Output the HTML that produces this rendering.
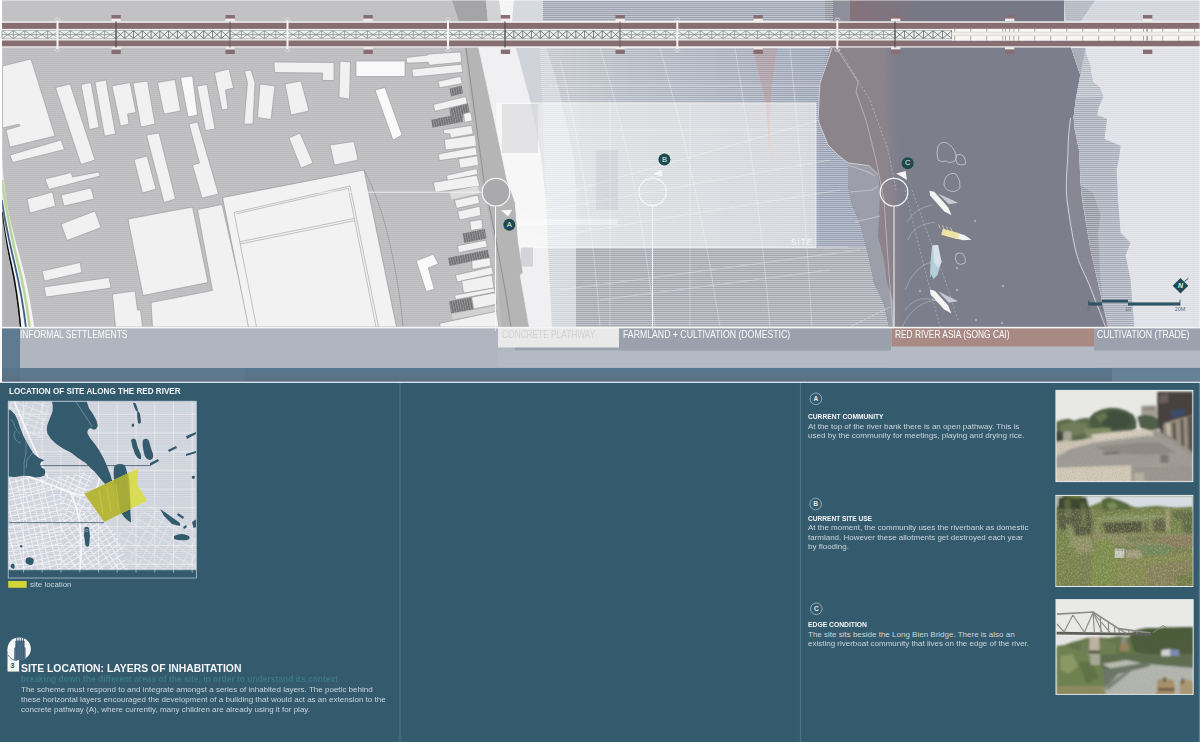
<!DOCTYPE html>
<html><head><meta charset="utf-8"><title>Site location: layers of inhabitation</title>
<style>
html,body{margin:0;padding:0;}
body{width:1200px;height:742px;position:relative;overflow:hidden;background:#345a6d;font-family:"Liberation Sans",sans-serif;}
svg{position:absolute;left:0;top:0;}
.t{position:absolute;white-space:nowrap;line-height:1;transform-origin:0 0;}

.lab{font-size:10.2px;color:#fbfcfd;}
.h{font-weight:bold;color:#f4f6f7;font-size:6.9px;}
.p{color:#cbd5dc;font-size:8px;}
.mk{color:#eef4f4;font-size:7.6px;}
.cm{font-weight:bold;color:#e3eaee;font-size:6.6px;}

</style></head><body>
<svg width="1200" height="742" viewBox="0 0 1200 742">
<defs>
<pattern id="hs" width="4" height="2" patternUnits="userSpaceOnUse"><rect width="4" height="1" fill="#ffffff" opacity="0.4"/></pattern>
<pattern id="hs2" width="4" height="2" patternUnits="userSpaceOnUse"><rect width="4" height="1" fill="#ffffff" opacity="0.14"/></pattern>
<pattern id="gs" width="4" height="2" patternUnits="userSpaceOnUse"><rect width="4" height="1" fill="#ffffff" opacity="0.07"/></pattern>
<clipPath id="topclip"><rect x="2.2" y="0" width="1198" height="327"/></clipPath>
<filter id="sb" x="-20%" y="-5%" width="140%" height="110%"><feGaussianBlur stdDeviation="4.5"/></filter>
<filter id="sb1" x="-20%" y="-5%" width="140%" height="110%"><feGaussianBlur stdDeviation="1.2"/></filter>
<clipPath id="rivclip"><polygon points="830.0,0.0 1064.0,0.0 1066.0,21.0 1071.2,47.9 1080.3,75.2 1076.0,98.2 1073.6,117.6 1074.8,130.0 1079.0,150.0 1080.5,183.0 1090.5,250.0 1108.0,327.0 889.0,327.0 884.0,304.0 874.0,283.0 869.0,258.0 861.0,227.0 852.0,204.0 848.0,186.0 848.0,163.0 838.0,155.0 828.0,145.0 818.0,120.0 820.0,83.0 830.0,48.0" fill="#000" /></clipPath>
<linearGradient id="tsg" x1="546" x2="830" y1="0" y2="0" gradientUnits="userSpaceOnUse"><stop offset="0" stop-color="#c0c3ca"/><stop offset="0.3" stop-color="#aeb4bf"/><stop offset="1" stop-color="#939daf"/></linearGradient>
<linearGradient id="tsn" x1="546" x2="830" y1="0" y2="0" gradientUnits="userSpaceOnUse"><stop offset="0" stop-color="#c2c4c9"/><stop offset="0.3" stop-color="#b3b6bd"/><stop offset="1" stop-color="#a3a8b2"/></linearGradient>
<linearGradient id="redg" x1="0" x2="1" y1="0" y2="0"><stop offset="0" stop-color="#86727a"/><stop offset="1" stop-color="#777886"/></linearGradient><pattern id="hatch" width="2.4" height="2.4" patternUnits="userSpaceOnUse" patternTransform="rotate(-12)"><rect width="2.4" height="2.4" fill="#6f6f72"/><rect width="0.7" height="2.4" fill="#a2a2a4"/><rect width="2.4" height="0.5" fill="#8e8e90"/></pattern><clipPath id="eastclip"><polygon points="478.8,48.0 494.0,118.0 507.0,180.0 515.2,202.2 518.2,240.6 523.2,273.0 520.2,275.0 529.3,327.0 900.0,327.0 900.0,48.0" fill="#000" /></clipPath><linearGradient id="stg" x1="0" x2="0" y1="0" y2="1"><stop offset="0" stop-color="#56758e"/><stop offset="0.5" stop-color="#59748a"/><stop offset="1" stop-color="#5b6f80"/></linearGradient><clipPath id="mapclip"><rect x="8.2" y="401.2" width="188.1" height="168.6"/></clipPath>
<pattern id="ms" width="4" height="1.9" patternUnits="userSpaceOnUse"><rect width="4" height="0.8" fill="#ffffff" opacity="0.28"/></pattern>
<clipPath id="mc1"><polygon points="8.0,478.0 46.0,478.0 62.0,500.0 62.0,570.0 8.0,570.0" fill="#000" /></clipPath>
<clipPath id="mc2"><polygon points="46.0,478.0 100.0,470.0 84.0,494.0 95.0,509.0 62.0,520.0 62.0,500.0" fill="#000" /></clipPath>
<clipPath id="mc3"><polygon points="62.0,520.0 95.0,509.0 104.0,522.0 118.0,535.0 128.0,570.0 62.0,570.0" fill="#000" /></clipPath>
<clipPath id="mc4"><polygon points="118.0,535.0 150.0,505.0 196.0,530.0 196.0,570.0 128.0,570.0" fill="#000" /></clipPath>
<clipPath id="mc5"><polygon points="8.0,401.0 50.0,401.0 46.0,420.0 40.0,440.0 20.0,428.0 8.0,409.0" fill="#000" /></clipPath>
<clipPath id="yclip"><polygon points="84.4,493.8 138.3,468.4 137.4,485.0 147.1,500.8 104.2,521.8" fill="#000" /></clipPath><filter id="b1" x="-10%" y="-10%" width="120%" height="120%"><feGaussianBlur stdDeviation="0.9"/></filter>
<filter id="b2" x="-10%" y="-10%" width="120%" height="120%"><feGaussianBlur stdDeviation="1.8"/></filter>
<filter id="b05" x="-10%" y="-10%" width="120%" height="120%"><feGaussianBlur stdDeviation="0.45"/></filter>
<filter id="nzd" x="0" y="0" width="100%" height="100%"><feTurbulence type="fractalNoise" baseFrequency="0.55 0.7" numOctaves="2" seed="4"/><feColorMatrix type="matrix" values="0 0 0 0 0.12  0 0 0 0 0.15  0 0 0 0 0.08  1.6 0 0 0 -0.62"/></filter>
<filter id="nzl" x="0" y="0" width="100%" height="100%"><feTurbulence type="fractalNoise" baseFrequency="0.6 0.5" numOctaves="2" seed="11"/><feColorMatrix type="matrix" values="0 0 0 0 0.78  0 0 0 0 0.8  0 0 0 0 0.55  0 1.6 0 0 -0.68"/></filter>
<filter id="nzs" x="0" y="0" width="100%" height="100%"><feTurbulence type="fractalNoise" baseFrequency="0.8" numOctaves="2" seed="2"/><feColorMatrix type="matrix" values="0 0 0 0 0.2  0 0 0 0 0.2  0 0 0 0 0.2  1.4 0 0 0 -0.6"/></filter>
<clipPath id="pcA"><rect x="1056.3" y="390.8" width="136.1" height="90.4"/></clipPath>
<clipPath id="pcB"><rect x="1056.3" y="495.8" width="136.1" height="90.3"/></clipPath>
<clipPath id="pcC"><rect x="1056.4" y="600.0" width="136.4" height="94.0"/></clipPath>
</defs>
<rect x="0" y="0" width="1200" height="383" fill="#ffffff"/>
<g clip-path="url(#topclip)">
<rect x="2" y="0" width="540" height="327" fill="#bdbdc0"/>
<rect x="2" y="0" width="540" height="327" fill="url(#gs)"/>
<polygon points="457.0,0.0 900.0,0.0 900.0,327.0 529.3,327.0 520.2,275.0 523.2,273.0 518.2,240.6 515.2,202.2 507.0,180.0 494.0,118.0 478.8,48.0 470.0,21.0" fill="#f0f0f2" />
<polygon points="516.0,48.0 546.0,48.0 556.0,80.0 566.0,120.0 574.0,160.0 576.0,190.0 576.0,327.0 552.0,327.0 548.0,247.0 546.0,200.0 540.0,150.0 530.0,100.0" fill="#cfd2d8" />
<polygon points="546.0,48.0 900.0,48.0 900.0,247.5 576.0,247.5 576.0,190.0 574.0,160.0 566.0,120.0 556.0,80.0" fill="url(#tsg)" />
<polygon points="561.0,103.0 816.0,103.0 816.0,247.5 576.0,247.5 576.0,190.0 574.0,160.0 566.0,120.0" fill="url(#tsn)" />
<rect x="576" y="247.5" width="324" height="80" fill="#a1a5af"/>
<rect x="2" y="0" width="455" height="21" fill="#c2c2c4"/>
<polygon points="452.0,0.0 486.0,0.0 488.0,21.5 459.0,21.5" fill="#a5a5a7" />
<polygon points="486.0,0.0 500.0,0.0 503.0,21.5 488.0,21.5" fill="#d2d3d5" />
<polygon points="499.0,0.0 514.0,0.0 512.0,21.5 502.0,21.5" fill="#f5f5f5" />
<polygon points="514.0,0.0 545.0,0.0 543.0,21.5 512.0,21.5" fill="#d6d9de" />
<rect x="543" y="0" width="290" height="21" fill="#9aa2b1"/>
<polygon points="830.0,0.0 1064.0,0.0 1066.0,21.0 1071.2,47.9 1080.3,75.2 1076.0,98.2 1073.6,117.6 1074.8,130.0 1079.0,150.0 1080.5,183.0 1090.5,250.0 1108.0,327.0 889.0,327.0 884.0,304.0 874.0,283.0 869.0,258.0 861.0,227.0 852.0,204.0 848.0,186.0 848.0,163.0 838.0,155.0 828.0,145.0 818.0,120.0 820.0,83.0 830.0,48.0" fill="#7d7e8c" />
<rect x="825" y="0" width="27" height="21" fill="#8e8f9a"/>
<rect x="850" y="0" width="216" height="21" fill="#777886"/>
<rect x="850" y="0" width="75" height="21" fill="url(#redg)"/>
<g clip-path="url(#rivclip)">
<polygon points="770.0,30.0 887.0,30.0 889.0,120.0 895.0,200.0 899.0,345.0 770.0,345.0" fill="#8c848b" filter="url(#sb)"/>
<polygon points="838.0,155.0 848.0,162.0 869.0,165.6 878.0,174.5 880.0,191.0 879.0,217.0 878.0,237.0 884.0,260.0 887.0,283.0 894.5,304.0 894.5,327.0 889.0,327.0 884.0,304.0 874.0,283.0 869.0,258.0 861.0,227.0 852.0,204.0 848.0,186.0 848.0,163.0" fill="#9c9eaa" />
</g>
<polygon points="540.0,48.0 832.0,48.0 820.0,83.0 818.0,120.0 828.0,145.0 838.0,155.0 848.0,163.0 848.0,186.0 852.0,204.0 861.0,227.0 869.0,258.0 874.0,283.0 884.0,304.0 889.0,327.0 552.0,327.0 548.0,247.0 546.0,200.0" fill="url(#hs)" />
<rect x="543" y="0" width="290" height="21" fill="url(#hs)"/>
<path d="M832 48L820 83L818 120L828 145L838 155L848 163L869 165.6L878 174.5" stroke="#e4e4ea" stroke-width="0.8" fill="none" opacity="0.85"/>
<polygon points="1070.0,118.0 1068.0,150.0 1067.0,200.0 1075.5,250.0 1090.5,288.0 1105.5,327.0 1110.0,327.0 1090.5,250.0 1080.5,183.0 1079.0,150.0 1074.8,130.0 1073.6,117.6" fill="#878894" />
<polygon points="1064.0,0.0 1200.0,0.0 1200.0,327.0 1108.0,327.0 1090.5,250.0 1082.2,200.0 1080.5,183.0 1079.0,150.0 1074.8,130.0 1073.6,117.6 1076.0,98.2 1080.3,75.2 1071.2,47.9 1066.0,21.0" fill="#dfe0e6" />
<rect x="1064" y="0" width="136" height="21.5" fill="#d3d5dd"/>
<polygon points="1064.0,0.0 1095.0,0.0 1080.7,21.5 1066.0,21.5" fill="#b5b9c3" />
<polygon points="1080.3,75.2 1085.2,47.9 1086.4,55.8 1090.0,64.2 1091.2,74.0 1093.0,82.4 1099.7,87.3 1103.3,97.0 1098.5,107.9 1097.3,115.2 1107.0,118.8 1104.5,139.0 1120.6,145.8 1119.0,158.0 1116.6,170.0 1118.0,200.0 1120.6,232.7 1130.6,242.7 1125.6,255.3 1130.6,280.3 1134.3,327.0 1108.0,327.0 1090.5,250.0 1082.2,200.0 1080.5,183.0 1079.0,150.0 1074.8,130.0 1073.6,117.6 1076.0,98.2" fill="#a4a9b6" />
<polygon points="1080.3,75.2 1085.2,47.9 1086.4,55.8 1090.0,64.2 1091.2,74.0 1093.0,82.4 1099.7,87.3 1103.3,97.0 1076.0,98.2" fill="#b4b8c2" />
<polygon points="1081.0,186.0 1093.0,192.6 1100.5,215.0 1098.0,232.7 1100.5,280.0 1103.0,300.0 1090.5,250.0" fill="#8f93a0" />
<polygon points="1064.0,0.0 1200.0,0.0 1200.0,327.0 1108.0,327.0 1090.5,250.0 1082.2,200.0 1080.5,183.0 1079.0,150.0 1074.8,130.0 1073.6,117.6 1076.0,98.2 1080.3,75.2 1071.2,47.9 1066.0,21.0" fill="url(#hs2)" />
<polygon points="1080.3,75.2 1085.2,47.9 1086.4,55.8 1090.0,64.2 1091.2,74.0 1093.0,82.4 1099.7,87.3 1103.3,97.0 1098.5,107.9 1097.3,115.2 1107.0,118.8 1104.5,139.0 1120.6,145.8 1119.0,158.0 1116.6,170.0 1118.0,200.0 1120.6,232.7 1130.6,242.7 1125.6,255.3 1130.6,280.3 1134.3,327.0 1108.0,327.0 1090.5,250.0 1082.2,200.0 1080.5,183.0 1079.0,150.0 1074.8,130.0 1073.6,117.6 1076.0,98.2" fill="url(#hs)" opacity="0.75"/>
<polygon points="1071.2,47.9 1085.2,47.9 1080.3,75.2" fill="#a9aeb9" />
</g>
<g clip-path="url(#topclip)">
<polygon points="2.5,66.0 31.0,59.0 55.0,136.0 10.0,147.0 6.0,130.0 20.0,126.0 19.0,124.0 2.5,128.0" fill="#f1f1f1" stroke="#8a8a8c" stroke-width="0.5"/>
<polygon points="10.0,155.0 61.0,140.0 64.5,149.5 12.5,162.5" fill="#f1f1f1" stroke="#8a8a8c" stroke-width="0.5"/>
<polygon points="55.5,87.5 70.0,84.0 95.0,160.0 81.0,164.5" fill="#f1f1f1" stroke="#8a8a8c" stroke-width="0.5"/>
<polygon points="81.0,84.5 91.0,82.5 99.0,127.5 89.5,129.5" fill="#f1f1f1" stroke="#8a8a8c" stroke-width="0.5"/>
<polygon points="95.0,82.0 106.0,80.0 115.5,134.0 104.5,136.0" fill="#f1f1f1" stroke="#8a8a8c" stroke-width="0.5"/>
<polygon points="112.0,86.0 130.0,82.5 136.0,112.5 127.5,114.0 129.0,124.0 120.5,126.0" fill="#f1f1f1" stroke="#8a8a8c" stroke-width="0.5"/>
<polygon points="133.0,83.0 147.5,81.0 155.0,124.0 141.0,127.0" fill="#f1f1f1" stroke="#8a8a8c" stroke-width="0.5"/>
<polygon points="157.5,82.5 175.0,79.5 180.5,111.0 164.0,114.0" fill="#f1f1f1" stroke="#8a8a8c" stroke-width="0.5"/>
<polygon points="180.5,77.5 192.5,76.0 197.5,115.0 188.0,117.0" fill="#f9f9f9" stroke="#8a8a8c" stroke-width="0.5"/>
<polygon points="197.0,86.0 207.0,84.5 215.0,129.0 205.5,130.5" fill="#f1f1f1" stroke="#8a8a8c" stroke-width="0.5"/>
<polygon points="214.5,72.5 229.0,69.0 233.5,88.0 225.5,90.0 228.0,109.0 222.0,110.0" fill="#f1f1f1" stroke="#8a8a8c" stroke-width="0.5"/>
<polygon points="244.5,71.0 251.0,70.0 255.0,82.5 253.0,124.0 244.0,124.0 247.5,82.5" fill="#f1f1f1" stroke="#8a8a8c" stroke-width="0.5"/>
<polygon points="260.0,84.0 275.0,86.0 271.0,119.5 257.5,117.5" fill="#f1f1f1" stroke="#8a8a8c" stroke-width="0.5"/>
<polygon points="274.0,62.0 334.0,62.5 334.0,80.5 322.5,80.5 322.5,73.0 274.5,72.5" fill="#f1f1f1" stroke="#8a8a8c" stroke-width="0.5"/>
<polygon points="285.0,84.0 301.0,81.0 309.0,111.0 291.0,115.0" fill="#f1f1f1" stroke="#8a8a8c" stroke-width="0.5"/>
<polygon points="146.5,135.0 159.0,133.0 175.5,199.0 164.0,202.5" fill="#f1f1f1" stroke="#8a8a8c" stroke-width="0.5"/>
<polygon points="134.0,159.5 147.0,156.0 156.0,189.0 142.5,193.0" fill="#f1f1f1" stroke="#8a8a8c" stroke-width="0.5"/>
<polygon points="189.0,124.0 197.5,122.0 218.5,194.0 202.0,198.0 192.5,165.0 199.5,163.0" fill="#f1f1f1" stroke="#8a8a8c" stroke-width="0.5"/>
<polygon points="45.0,179.0 71.0,172.5 72.5,177.0 99.0,172.0 100.0,176.0 49.0,189.5" fill="#f1f1f1" stroke="#8a8a8c" stroke-width="0.5"/>
<polygon points="27.0,199.0 52.5,192.0 55.5,206.0 30.0,213.0" fill="#f1f1f1" stroke="#8a8a8c" stroke-width="0.5"/>
<polygon points="61.0,195.0 91.0,188.0 94.0,199.0 64.0,206.0" fill="#f1f1f1" stroke="#8a8a8c" stroke-width="0.5"/>
<polygon points="61.0,224.0 95.0,211.0 101.0,227.5 67.0,240.5" fill="#f1f1f1" stroke="#8a8a8c" stroke-width="0.5"/>
<polygon points="42.0,271.0 80.0,262.5 82.0,272.5 44.5,281.0" fill="#f1f1f1" stroke="#8a8a8c" stroke-width="0.5"/>
<polygon points="44.0,287.0 109.0,277.5 111.0,288.0 46.0,297.0" fill="#f1f1f1" stroke="#8a8a8c" stroke-width="0.5"/>
<polygon points="112.5,294.0 135.0,291.0 137.5,310.0 140.5,310.0 142.5,327.0 115.5,327.0" fill="#f1f1f1" stroke="#8a8a8c" stroke-width="0.5"/>
<polygon points="128.0,219.0 192.5,207.0 208.0,282.5 143.0,295.5" fill="#f1f1f1" stroke="#8a8a8c" stroke-width="0.5"/>
<polygon points="197.5,209.5 222.0,204.5 250.0,327.0 152.5,327.0 151.0,302.5 212.5,290.5" fill="#f1f1f1" stroke="#8a8a8c" stroke-width="0.5"/>
<polygon points="340.0,61.0 350.5,62.0 349.5,99.0 339.0,97.5" fill="#f1f1f1" stroke="#8a8a8c" stroke-width="0.5"/>
<polygon points="356.0,61.0 405.0,61.0 405.0,76.5 356.0,76.5" fill="#f9f9f9" stroke="#8a8a8c" stroke-width="0.5"/>
<polygon points="375.0,90.0 385.0,87.5 402.0,135.0 393.0,140.0" fill="#f9f9f9" stroke="#8a8a8c" stroke-width="0.5"/>
<polygon points="289.0,138.0 300.0,133.0 313.0,163.0 301.0,168.0" fill="#f1f1f1" stroke="#8a8a8c" stroke-width="0.5"/>
<polygon points="330.0,145.0 354.0,141.5 358.0,160.0 334.5,165.0" fill="#f1f1f1" stroke="#8a8a8c" stroke-width="0.5"/>
<polygon points="416.2,260.8 433.3,254.3 438.4,263.8 428.3,267.9 434.3,289.1 426.3,291.7" fill="#f9f9f9" stroke="#8a8a8c" stroke-width="0.5"/>
<polygon points="406.0,57.5 428.0,55.0 428.5,54.0 460.6,52.0 461.6,62.2 429.3,65.2 428.3,62.2 407.0,63.2" fill="#f1f1f1" stroke="#8a8a8c" stroke-width="0.5"/>
<polygon points="411.7,69.2 461.6,64.2 462.6,72.3 413.1,77.0" fill="#f1f1f1" stroke="#8a8a8c" stroke-width="0.5"/>
<polygon points="438.0,81.4 460.6,76.3 462.2,83.4 439.4,87.8" fill="#f1f1f1" stroke="#8a8a8c" stroke-width="0.5"/>
<polygon points="449.5,88.4 461.6,85.4 463.0,93.5 451.0,96.5" fill="url(#hatch)" />
<polygon points="433.3,104.6 465.7,96.5 467.3,103.6 434.7,111.3" fill="#f1f1f1" stroke="#8a8a8c" stroke-width="0.5"/>
<polygon points="449.5,108.6 467.7,103.6 469.7,112.7 462.6,114.7 463.0,121.8 432.3,127.8 431.3,119.7 450.5,115.7" fill="url(#hatch)" />
<polygon points="463.6,113.7 470.7,112.0 472.3,120.8 464.6,122.4" fill="#f1f1f1" stroke="#8a8a8c" stroke-width="0.5"/>
<polygon points="443.4,129.8 471.7,125.4 473.1,133.9 450.5,137.9 450.0,133.9 444.0,133.3" fill="#f1f1f1" stroke="#8a8a8c" stroke-width="0.5"/>
<polygon points="444.4,139.5 475.8,134.9 477.8,146.0 445.5,150.0" fill="#f1f1f1" stroke="#8a8a8c" stroke-width="0.5"/>
<polygon points="438.4,154.0 475.8,147.0 477.4,155.0 439.4,160.6" fill="#f1f1f1" stroke="#8a8a8c" stroke-width="0.5"/>
<polygon points="458.6,159.0 477.8,155.7 478.8,165.2 460.0,168.2" fill="#f1f1f1" stroke="#8a8a8c" stroke-width="0.5"/>
<polygon points="446.5,175.3 476.8,168.6 477.8,174.3 447.5,180.8" fill="#f1f1f1" stroke="#8a8a8c" stroke-width="0.5"/>
<polygon points="433.3,182.4 476.8,175.3 479.8,186.0 435.4,192.3" fill="#f1f1f1" stroke="#8a8a8c" stroke-width="0.5"/>
<polygon points="449.5,192.1 477.8,186.0 479.8,193.1 451.5,199.6" fill="#dcdcdc" />
<polygon points="454.5,200.2 477.8,195.2 479.8,203.2 456.6,208.3" fill="#f1f1f1" stroke="#8a8a8c" stroke-width="0.5"/>
<polygon points="457.6,211.3 479.8,206.3 480.8,215.4 459.6,220.0" fill="#f1f1f1" stroke="#8a8a8c" stroke-width="0.5"/>
<polygon points="469.7,221.4 481.8,219.4 482.8,228.5 471.1,230.5" fill="#f1f1f1" stroke="#8a8a8c" stroke-width="0.5"/>
<polygon points="462.6,233.5 484.8,229.1 486.5,238.6 464.2,243.0" fill="url(#hatch)" />
<polygon points="457.6,245.7 485.9,240.2 487.3,246.7 458.6,252.7" fill="#f1f1f1" stroke="#8a8a8c" stroke-width="0.5"/>
<polygon points="448.1,257.8 487.9,249.7 489.5,257.8 449.5,265.9" fill="url(#hatch)" />
<polygon points="471.7,260.8 489.9,257.8 490.9,265.9 472.3,269.5" fill="#f1f1f1" stroke="#8a8a8c" stroke-width="0.5"/>
<polygon points="455.6,275.0 491.9,266.9 493.3,274.0 457.0,282.0" fill="#f1f1f1" stroke="#8a8a8c" stroke-width="0.5"/>
<polygon points="461.6,281.0 491.9,275.0 494.0,288.0 463.6,293.0" fill="#f1f1f1" stroke="#8a8a8c" stroke-width="0.5"/>
<polygon points="454.5,295.2 494.0,288.0 495.0,292.0 455.6,299.6" fill="#f1f1f1" stroke="#8a8a8c" stroke-width="0.5"/>
<polygon points="449.1,301.2 471.7,297.2 473.7,309.3 451.0,313.3" fill="url(#hatch)" />
<polygon points="471.7,297.2 495.0,292.7 496.6,304.2 473.7,308.9" fill="#f1f1f1" stroke="#8a8a8c" stroke-width="0.5"/>
<polygon points="451.5,314.3 495.0,306.3 496.0,311.3 452.5,319.4" fill="#d2d2d2" />
<polygon points="439.4,323.4 496.6,311.3 499.0,327.0 440.4,327.0" fill="#f1f1f1" stroke="#8a8a8c" stroke-width="0.5"/>
<polygon points="222.5,197.5 364.0,170.0 396.5,327.0 248.5,327.0" fill="#f2f2f2" stroke="#8e8e90" stroke-width="0.6"/>
<path d="M234 212.5L350 186L378.5 327M256.5 327L234 212.5M236.5 213.8L348.3 188.3L376 327M239.5 241.8L354 218.5M240 244L354.5 220.7" stroke="#8e8e90" stroke-width="0.5" fill="none"/>
<path d="M364 170C372 185 380 205 386 228S400 290 403 327" stroke="#8a8a8c" stroke-width="0.6" fill="none"/>
<polygon points="464.6,48.0 478.8,48.0 494.0,118.0 507.0,180.0 515.2,202.2 518.2,240.6 523.2,273.0 520.2,275.0 529.3,327.0 501.0,327.0 497.0,260.8 488.9,214.3 479.8,180.0" fill="#b5b5b6" />
<path d="M478.8 48L494 118L507 180L515.2 202.2L518.2 240.6L523.2 273L520.2 275L529.3 327" stroke="#f2f2f2" stroke-width="0.8" fill="none"/>
<path d="M466 48L483.8 180L495 234.5L505 289L511 327" stroke="#77777a" stroke-width="0.6" fill="none"/>
<path d="M2 160C4 185 6 200 9.4 216S17 246 22 264.8S31 305 34.5 328L21 328C19 305 15 282 11.3 264.8S5 230 2.7 216L2 210Z" fill="#f4f4f4"/>
<path d="M2 212C3 222 7 246 11.3 264.8S18 300 20.6 328" stroke="#0d0d0d" stroke-width="1.6" fill="none"/>
<path d="M2 200C3 210 9 240 14.8 264.8S23 302 26 328" stroke="#3d5f86" stroke-width="1.8" fill="none"/>
<path d="M2 180C4 198 12 240 18.3 264.8S27 305 29.8 328" stroke="#b9d49a" stroke-width="2.6" fill="none"/>
<path d="M2 214C3 222 6.5 246 10 264.8S17 300 19.6 328L2 328Z" fill="#b3b3b5"/>
</g>
<g clip-path="url(#topclip)">
<path d="M560 60Q590 180 600 327M600 48Q640 180 655 327M660 48Q700 190 720 327M735 48Q760 200 770 327M790 48Q805 200 812 327M520 215L830 160M530 240L840 190M540 200L820 120M560 290L860 250M600 300L830 270M540 130L817 130M550 86L819 86M576 247L848 247M610 100V327M690 103V327" stroke="#ffffff" stroke-width="0.7" fill="none" opacity="0.45"/>
<path d="M753 48L766 103L772 160M776 48L768 103L770 150" stroke="#d9a9a0" stroke-width="0.8" fill="none" opacity="0.8"/>
<polygon points="753.0,48.0 777.0,48.0 771.0,90.0 769.0,150.0 766.0,103.0" fill="#b9908f" opacity="0.36"/>
<g clip-path="url(#eastclip)">
<rect x="497" y="103" width="319" height="144.5" fill="#ffffff" opacity="0.47"/>
<path d="M497 103H816V247.5H497Z" stroke="#ffffff" stroke-width="0.8" fill="none" opacity="0.75"/>
</g>
<rect x="502" y="104" width="36" height="49" fill="#c9cace" opacity="0.45"/>
<rect x="518" y="219" width="100" height="6" fill="#ffffff" opacity="0.35"/>
<rect x="521" y="247.5" width="12" height="19" fill="#c6c7cc" opacity="0.7"/>
<rect x="596" y="150" width="22" height="60" fill="#b9bcc4" opacity="0.25"/>
<path d="M837 49L858 82L856 92L866 120L876 160L884 200L888 260L893 327" stroke="#d9d3d6" stroke-width="0.7" fill="none" opacity="0.8"/>
<path d="M839 49L870 100L888 150L896 190" stroke="#cfcfd6" stroke-width="0.7" stroke-dasharray="2 2" fill="none" opacity="0.8"/>
<path d="M905 190L915 230L925 270L940 327M912 190L930 240L945 280L958 320" stroke="#c9c9d2" stroke-width="0.7" stroke-dasharray="2 2" fill="none" opacity="0.7"/>
<path d="M907 222Q915 208 932 205M908 240Q912 225 935 222M905 290Q915 265 932 262M905 310Q920 290 945 305M902 327Q915 300 940 300" stroke="#c4c4cd" stroke-width="0.7" fill="none" opacity="0.7"/>
<path d="M848 165L868 172L875 176M850 192L872 190L878 186M855 222L880 216M850 327L890 307" stroke="#d5d5dc" stroke-width="0.8" fill="none" opacity="0.8"/>
<path d="M1070.5 118C1069 130 1068 140 1068 150S1065 185 1067 200S1072 235 1075.5 250S1086 276 1090.5 288S1100 312 1105.5 327" stroke="#e8e8ee" stroke-width="0.8" fill="none"/>
<path d="M938 146q3 -5 9 -3q6 3 8 9q3 5 0 9q-6 3 -9 0q-4 2 -8 -1q-2 -7 0 -14zM956.5 155q4 -2 7 1q3 5 2 8q-4 2 -8 0q-3 -4 -1 -9zM946 177q4 -5 10 -3q5 6 4 14q-5 5 -10 3q-6 -2 -6 -7q0 -4 2 -7zM956 254q4 -2 7 0q4 5 2 9q-5 3 -8 0q-3 -4 -1 -9z" stroke="#c9cad4" stroke-width="0.8" fill="none"/>
<polygon points="938.0,193.4 958.2,202.8 948.8,204.2" fill="#c9cad3" />
<g transform="translate(940.5 203.0) rotate(48.0)"><path d="M-16.5 0L-12.5 -2.8L8.5 -2.8L16.5 0L8.5 2.8L-12.5 2.8Z" fill="#f4f4f2"/></g>
<g transform="translate(957.0 235.8) rotate(15.0)"><path d="M-15.0 0L-11.0 -2.8L7.0 -2.8L15.0 0L7.0 2.8L-11.0 2.8Z" fill="#f4f4f2"/></g>
<rect x="-15.5" y="-3.1" width="17" height="6.2" fill="#f0e2a3" transform="translate(957 235.8) rotate(15)"/>
<path d="M938.5 224.5l1.8 4M942.5 225.5l1.8 4M946.5 226.5l1.8 4M950.5 227.5l1.8 4" stroke="#e9e2c0" stroke-width="0.7"/>
<polygon points="938.0,291.3 958.2,301.3 948.8,302.7" fill="#c9cad3" />
<g transform="translate(940.7 301.5) rotate(48.0)"><path d="M-16.0 0L-12.0 -2.8L8.0 -2.8L16.0 0L8.0 2.8L-12.0 2.8Z" fill="#f4f4f2"/></g>
<path d="M932 245.5L938 245L941.5 262L937.5 275L933.5 279L930 277L930.5 262Z" fill="#b7d4e0" opacity="0.92"/>
<path d="M933 245.5L938 245L941.5 262L938 268L934 262Z" fill="#dfe4ea" opacity="0.85"/>
<path d="M930.5 274L933.5 279L931 278Z" fill="#3f7f9a"/>
<circle cx="975" cy="221" r="1.2" fill="#a9aab6"/>
<circle cx="1003" cy="286" r="1.2" fill="#a9aab6"/>
<circle cx="976" cy="320" r="1.2" fill="#a9aab6"/>
<circle cx="1002" cy="323" r="1.2" fill="#a9aab6"/>
<circle cx="957" cy="268" r="1.2" fill="#a9aab6"/>
<circle cx="920" cy="291" r="1.2" fill="#a9aab6"/>
<circle cx="957" cy="290" r="1.2" fill="#a9aab6"/>
<path d="M306 192.2H482" stroke="#f4f4f4" stroke-width="0.9"/>
<path d="M495.5 206V327M652.5 206V327M894 206V327" stroke="#f6f6f6" stroke-width="1"/>
<circle cx="496" cy="192.2" r="13.8" fill="#aaaaac" stroke="#f6f6f6" stroke-width="1.2"/>
<circle cx="652.6" cy="191.8" r="13.7" fill="none" stroke="#f6f6f6" stroke-width="1.2"/>
<circle cx="894" cy="192.2" r="13.8" fill="none" stroke="#f6f6f6" stroke-width="1.2"/>
<polygon points="501.0,210.3 512.1,209.9 508.1,216.4" fill="#f6f6f6" />
<polygon points="653.6,174.4 661.3,169.6 662.6,176.3" fill="#f6f6f6" />
<polygon points="896.2,173.4 905.6,171.0 907.0,180.0" fill="#f6f6f6" />
<circle cx="509.3" cy="224.7" r="6" fill="#1d4a4d"/>
<circle cx="664.4" cy="159.4" r="6" fill="#1d4a4d"/>
<circle cx="907.7" cy="163.2" r="6" fill="#1d4a4d"/>
<rect x="1088.4" y="302.4" width="13.6" height="3.2" fill="#2f5366"/>
<rect x="1102" y="299.7" width="26" height="3" fill="#2f5366"/>
<rect x="1128" y="302.4" width="52" height="3.2" fill="#2f5366"/>
<path d="M1180 299.7V305.6M1088.6 300.5V305" stroke="#2f5366" stroke-width="0.8"/>
<polygon points="1180.5,278.0 1188.3,285.8 1180.5,293.6 1172.7,285.8" fill="#204b55" />
<path d="M1184.5 281.5L1188.3 278.3" stroke="#204b55" stroke-width="1"/>
</g>
<rect x="111.5" y="15" width="9.3" height="4" fill="#866e72"/>
<rect x="111.5" y="18.6" width="9.3" height="2.4" fill="#f1ecec"/>
<rect x="111.5" y="47.2" width="9.3" height="2.4" fill="#f1ecec"/>
<rect x="111.5" y="49.6" width="9.3" height="4.4" fill="#866e72"/>
<rect x="225.5" y="15" width="9.3" height="4" fill="#866e72"/>
<rect x="225.5" y="18.6" width="9.3" height="2.4" fill="#f1ecec"/>
<rect x="225.5" y="47.2" width="9.3" height="2.4" fill="#f1ecec"/>
<rect x="225.5" y="49.6" width="9.3" height="4.4" fill="#866e72"/>
<rect x="363.5" y="15" width="9.3" height="4" fill="#866e72"/>
<rect x="363.5" y="18.6" width="9.3" height="2.4" fill="#f1ecec"/>
<rect x="363.5" y="47.2" width="9.3" height="2.4" fill="#f1ecec"/>
<rect x="363.5" y="49.6" width="9.3" height="4.4" fill="#866e72"/>
<rect x="500.8" y="15" width="9.3" height="4" fill="#866e72"/>
<rect x="500.8" y="18.6" width="9.3" height="2.4" fill="#f1ecec"/>
<rect x="500.8" y="47.2" width="9.3" height="2.4" fill="#f1ecec"/>
<rect x="500.8" y="49.6" width="9.3" height="4.4" fill="#866e72"/>
<rect x="615.5" y="15" width="9.3" height="4" fill="#866e72"/>
<rect x="615.5" y="18.6" width="9.3" height="2.4" fill="#f1ecec"/>
<rect x="615.5" y="47.2" width="9.3" height="2.4" fill="#f1ecec"/>
<rect x="615.5" y="49.6" width="9.3" height="4.4" fill="#866e72"/>
<rect x="753.5" y="15" width="9.3" height="4" fill="#866e72"/>
<rect x="753.5" y="18.6" width="9.3" height="2.4" fill="#f1ecec"/>
<rect x="753.5" y="47.2" width="9.3" height="2.4" fill="#f1ecec"/>
<rect x="753.5" y="49.6" width="9.3" height="4.4" fill="#866e72"/>
<rect x="891.0" y="15" width="9.3" height="4" fill="#866e72"/>
<rect x="891.0" y="18.6" width="9.3" height="2.4" fill="#f1ecec"/>
<rect x="891.0" y="47.2" width="9.3" height="2.4" fill="#f1ecec"/>
<rect x="891.0" y="49.6" width="9.3" height="4.4" fill="#866e72"/>
<rect x="1005.0" y="15" width="9.3" height="4" fill="#866e72"/>
<rect x="1005.0" y="18.6" width="9.3" height="2.4" fill="#f1ecec"/>
<rect x="1005.0" y="47.2" width="9.3" height="2.4" fill="#f1ecec"/>
<rect x="1005.0" y="49.6" width="9.3" height="4.4" fill="#866e72"/>
<rect x="1143.0" y="15" width="9.3" height="4" fill="#866e72"/>
<rect x="1143.0" y="18.6" width="9.3" height="2.4" fill="#f1ecec"/>
<rect x="1143.0" y="47.2" width="9.3" height="2.4" fill="#f1ecec"/>
<rect x="1143.0" y="49.6" width="9.3" height="4.4" fill="#866e72"/>
<rect x="2" y="21.3" width="1198" height="26.2" fill="#f4f2f1"/>
<rect x="2" y="22.8" width="1198" height="6.1" fill="#866e72"/>
<rect x="2" y="40.5" width="1198" height="5.8" fill="#866e72"/>
<rect x="2" y="30.5" width="950" height="8.2" fill="#eef0ef"/>
<path d="M116.0 30.6L124.8 38.6M116.0 38.6L124.8 30.6M116.0 30.5V38.7M124.8 30.6L133.5 38.6M124.8 38.6L133.5 30.6M124.8 30.5V38.7M133.5 30.6L142.3 38.6M133.5 38.6L142.3 30.6M133.5 30.5V38.7M142.3 30.6L151.1 38.6M142.3 38.6L151.1 30.6M142.3 30.5V38.7M151.1 30.6L159.8 38.6M151.1 38.6L159.8 30.6M151.1 30.5V38.7M159.8 30.6L168.6 38.6M159.8 38.6L168.6 30.6M159.8 30.5V38.7M168.6 30.6L177.4 38.6M168.6 38.6L177.4 30.6M168.6 30.5V38.7M177.4 30.6L186.2 38.6M177.4 38.6L186.2 30.6M177.4 30.5V38.7M186.2 30.6L194.9 38.6M186.2 38.6L194.9 30.6M186.2 30.5V38.7M194.9 30.6L203.7 38.6M194.9 38.6L203.7 30.6M194.9 30.5V38.7M203.7 30.6L212.5 38.6M203.7 38.6L212.5 30.6M203.7 30.5V38.7M212.5 30.6L221.2 38.6M212.5 38.6L221.2 30.6M212.5 30.5V38.7M221.2 30.6L230.0 38.6M221.2 38.6L230.0 30.6M221.2 30.5V38.7M505.0 30.6L513.8 38.6M505.0 38.6L513.8 30.6M505.0 30.5V38.7M513.8 30.6L522.7 38.6M513.8 38.6L522.7 30.6M513.8 30.5V38.7M522.7 30.6L531.5 38.6M522.7 38.6L531.5 30.6M522.7 30.5V38.7M531.5 30.6L540.4 38.6M531.5 38.6L540.4 30.6M531.5 30.5V38.7M540.4 30.6L549.2 38.6M540.4 38.6L549.2 30.6M540.4 30.5V38.7M549.2 30.6L558.1 38.6M549.2 38.6L558.1 30.6M549.2 30.5V38.7M558.1 30.6L566.9 38.6M558.1 38.6L566.9 30.6M558.1 30.5V38.7M566.9 30.6L575.8 38.6M566.9 38.6L575.8 30.6M566.9 30.5V38.7M575.8 30.6L584.6 38.6M575.8 38.6L584.6 30.6M575.8 30.5V38.7M584.6 30.6L593.5 38.6M584.6 38.6L593.5 30.6M584.6 30.5V38.7M593.5 30.6L602.3 38.6M593.5 38.6L602.3 30.6M593.5 30.5V38.7M602.3 30.6L611.2 38.6M602.3 38.6L611.2 30.6M602.3 30.5V38.7M611.2 30.6L620.0 38.6M611.2 38.6L620.0 30.6M611.2 30.5V38.7M895.0 30.6L904.5 38.6M895.0 38.6L904.5 30.6M895.0 30.5V38.7M904.5 30.6L914.0 38.6M904.5 38.6L914.0 30.6M904.5 30.5V38.7M914.0 30.6L923.5 38.6M914.0 38.6L923.5 30.6M914.0 30.5V38.7M923.5 30.6L933.0 38.6M923.5 38.6L933.0 30.6M923.5 30.5V38.7M933.0 30.6L942.5 38.6M933.0 38.6L942.5 30.6M933.0 30.5V38.7M942.5 30.6L952.0 38.6M942.5 38.6L952.0 30.6M942.5 30.5V38.7" stroke="#56585c" stroke-width="0.75" fill="none"/>
<path d="M2.0 30.6L13.4 38.6M2.0 38.6L13.4 30.6M2.0 30.5V38.7M13.4 30.6L24.8 38.6M13.4 38.6L24.8 30.6M13.4 30.5V38.7M24.8 30.6L36.2 38.6M24.8 38.6L36.2 30.6M24.8 30.5V38.7M36.2 30.6L47.6 38.6M36.2 38.6L47.6 30.6M36.2 30.5V38.7M47.6 30.6L59.0 38.6M47.6 38.6L59.0 30.6M47.6 30.5V38.7M59.0 30.6L70.4 38.6M59.0 38.6L70.4 30.6M59.0 30.5V38.7M70.4 30.6L81.8 38.6M70.4 38.6L81.8 30.6M70.4 30.5V38.7M81.8 30.6L93.2 38.6M81.8 38.6L93.2 30.6M81.8 30.5V38.7M93.2 30.6L104.6 38.6M93.2 38.6L104.6 30.6M93.2 30.5V38.7M104.6 30.6L116.0 38.6M104.6 38.6L116.0 30.6M104.6 30.5V38.7M2.0 34.6H116.0M230.0 30.6L241.5 38.6M230.0 38.6L241.5 30.6M230.0 30.5V38.7M241.5 30.6L252.9 38.6M241.5 38.6L252.9 30.6M241.5 30.5V38.7M252.9 30.6L264.4 38.6M252.9 38.6L264.4 30.6M252.9 30.5V38.7M264.4 30.6L275.8 38.6M264.4 38.6L275.8 30.6M264.4 30.5V38.7M275.8 30.6L287.3 38.6M275.8 38.6L287.3 30.6M275.8 30.5V38.7M287.3 30.6L298.8 38.6M287.3 38.6L298.8 30.6M287.3 30.5V38.7M298.8 30.6L310.2 38.6M298.8 38.6L310.2 30.6M298.8 30.5V38.7M310.2 30.6L321.7 38.6M310.2 38.6L321.7 30.6M310.2 30.5V38.7M321.7 30.6L333.1 38.6M321.7 38.6L333.1 30.6M321.7 30.5V38.7M333.1 30.6L344.6 38.6M333.1 38.6L344.6 30.6M333.1 30.5V38.7M344.6 30.6L356.0 38.6M344.6 38.6L356.0 30.6M344.6 30.5V38.7M356.0 30.6L367.5 38.6M356.0 38.6L367.5 30.6M356.0 30.5V38.7M367.5 30.6L379.0 38.6M367.5 38.6L379.0 30.6M367.5 30.5V38.7M379.0 30.6L390.4 38.6M379.0 38.6L390.4 30.6M379.0 30.5V38.7M390.4 30.6L401.9 38.6M390.4 38.6L401.9 30.6M390.4 30.5V38.7M401.9 30.6L413.3 38.6M401.9 38.6L413.3 30.6M401.9 30.5V38.7M413.3 30.6L424.8 38.6M413.3 38.6L424.8 30.6M413.3 30.5V38.7M424.8 30.6L436.2 38.6M424.8 38.6L436.2 30.6M424.8 30.5V38.7M436.2 30.6L447.7 38.6M436.2 38.6L447.7 30.6M436.2 30.5V38.7M447.7 30.6L459.2 38.6M447.7 38.6L459.2 30.6M447.7 30.5V38.7M459.2 30.6L470.6 38.6M459.2 38.6L470.6 30.6M459.2 30.5V38.7M470.6 30.6L482.1 38.6M470.6 38.6L482.1 30.6M470.6 30.5V38.7M482.1 30.6L493.5 38.6M482.1 38.6L493.5 30.6M482.1 30.5V38.7M493.5 30.6L505.0 38.6M493.5 38.6L505.0 30.6M493.5 30.5V38.7M230.0 34.6H505.0M620.0 30.6L631.5 38.6M620.0 38.6L631.5 30.6M620.0 30.5V38.7M631.5 30.6L642.9 38.6M631.5 38.6L642.9 30.6M631.5 30.5V38.7M642.9 30.6L654.4 38.6M642.9 38.6L654.4 30.6M642.9 30.5V38.7M654.4 30.6L665.8 38.6M654.4 38.6L665.8 30.6M654.4 30.5V38.7M665.8 30.6L677.3 38.6M665.8 38.6L677.3 30.6M665.8 30.5V38.7M677.3 30.6L688.8 38.6M677.3 38.6L688.8 30.6M677.3 30.5V38.7M688.8 30.6L700.2 38.6M688.8 38.6L700.2 30.6M688.8 30.5V38.7M700.2 30.6L711.7 38.6M700.2 38.6L711.7 30.6M700.2 30.5V38.7M711.7 30.6L723.1 38.6M711.7 38.6L723.1 30.6M711.7 30.5V38.7M723.1 30.6L734.6 38.6M723.1 38.6L734.6 30.6M723.1 30.5V38.7M734.6 30.6L746.0 38.6M734.6 38.6L746.0 30.6M734.6 30.5V38.7M746.0 30.6L757.5 38.6M746.0 38.6L757.5 30.6M746.0 30.5V38.7M757.5 30.6L769.0 38.6M757.5 38.6L769.0 30.6M757.5 30.5V38.7M769.0 30.6L780.4 38.6M769.0 38.6L780.4 30.6M769.0 30.5V38.7M780.4 30.6L791.9 38.6M780.4 38.6L791.9 30.6M780.4 30.5V38.7M791.9 30.6L803.3 38.6M791.9 38.6L803.3 30.6M791.9 30.5V38.7M803.3 30.6L814.8 38.6M803.3 38.6L814.8 30.6M803.3 30.5V38.7M814.8 30.6L826.3 38.6M814.8 38.6L826.3 30.6M814.8 30.5V38.7M826.2 30.6L837.7 38.6M826.2 38.6L837.7 30.6M826.2 30.5V38.7M837.7 30.6L849.2 38.6M837.7 38.6L849.2 30.6M837.7 30.5V38.7M849.2 30.6L860.6 38.6M849.2 38.6L860.6 30.6M849.2 30.5V38.7M860.6 30.6L872.1 38.6M860.6 38.6L872.1 30.6M860.6 30.5V38.7M872.1 30.6L883.5 38.6M872.1 38.6L883.5 30.6M872.1 30.5V38.7M883.5 30.6L895.0 38.6M883.5 38.6L895.0 30.6M883.5 30.5V38.7M620.0 34.6H895.0" stroke="#7c8785" stroke-width="0.7" fill="none"/>
<path d="M2 30.5H952M2 38.7H952" stroke="#8d9896" stroke-width="0.6" fill="none"/>
<path d="M116.0 21.5V47.5" stroke="#4c4c50" stroke-width="1.1"/>
<path d="M505.0 21.5V47.5" stroke="#4c4c50" stroke-width="1.1"/>
<path d="M895.0 21.5V47.5" stroke="#4c4c50" stroke-width="1.1"/>
<path d="M230 21.5V47.5M620 21.5V47.5M952 30V39" stroke="#55555a" stroke-width="0.8"/>
<rect x="952" y="28.9" width="248" height="11.6" fill="#f8f7f5"/>
<rect x="952" y="31.7" width="248" height="4.4" fill="#dfe0dc"/>
<rect x="952" y="33.2" width="248" height="1.4" fill="#f4f4f1"/>
<path d="M954.7 28.9V31.7M954.7 36.1V40.5M970.7 28.9V31.7M970.7 36.1V40.5M986.7 28.9V31.7M986.7 36.1V40.5M1002.7 28.9V31.7M1002.7 36.1V40.5M1018.7 28.9V31.7M1018.7 36.1V40.5M1034.7 28.9V31.7M1034.7 36.1V40.5M1050.7 28.9V31.7M1050.7 36.1V40.5M1066.7 28.9V31.7M1066.7 36.1V40.5M1082.7 28.9V31.7M1082.7 36.1V40.5M1098.7 28.9V31.7M1098.7 36.1V40.5M1114.7 28.9V31.7M1114.7 36.1V40.5M1130.7 28.9V31.7M1130.7 36.1V40.5M1146.7 28.9V31.7M1146.7 36.1V40.5M1162.7 28.9V31.7M1162.7 36.1V40.5M1178.7 28.9V31.7M1178.7 36.1V40.5M1194.7 28.9V31.7M1194.7 36.1V40.5M1005.5 28.9V31.7M1005.5 36.1V40.5M1009.6 28.9V31.7M1009.6 36.1V40.5M1013.8 28.9V31.7M1013.8 36.1V40.5M1143.5 28.9V31.7M1143.5 36.1V40.5M1147.6 28.9V31.7M1147.6 36.1V40.5M1151.8 28.9V31.7M1151.8 36.1V40.5" stroke="#8f8385" stroke-width="0.7"/>
<rect x="56.5" y="20.3" width="2" height="29" fill="#f8f5f4"/>
<path d="M54.9 20.5a2.6 2.6 0 0 1 5.2 0M54.9 49a2.6 2.6 0 0 0 5.2 0" fill="none" stroke="#e4e4e4" stroke-width="0.7"/>
<rect x="286.5" y="20.3" width="2" height="29" fill="#f8f5f4"/>
<path d="M284.9 20.5a2.6 2.6 0 0 1 5.2 0M284.9 49a2.6 2.6 0 0 0 5.2 0" fill="none" stroke="#e4e4e4" stroke-width="0.7"/>
<rect x="447.0" y="20.3" width="2" height="29" fill="#f8f5f4"/>
<path d="M445.4 20.5a2.6 2.6 0 0 1 5.2 0M445.4 49a2.6 2.6 0 0 0 5.2 0" fill="none" stroke="#e4e4e4" stroke-width="0.7"/>
<rect x="676.3" y="20.3" width="2" height="29" fill="#f8f5f4"/>
<path d="M674.7 20.5a2.6 2.6 0 0 1 5.2 0M674.7 49a2.6 2.6 0 0 0 5.2 0" fill="none" stroke="#e4e4e4" stroke-width="0.7"/>
<rect x="836.3" y="20.3" width="2" height="29" fill="#f8f5f4"/>
<path d="M834.7 20.5a2.6 2.6 0 0 1 5.2 0M834.7 49a2.6 2.6 0 0 0 5.2 0" fill="none" stroke="#e4e4e4" stroke-width="0.7"/>
<rect x="2" y="327" width="1198" height="55" fill="#b0b7c1"/>
<rect x="2" y="327" width="18" height="55" fill="#5e7b92"/>
<rect x="2" y="367.8" width="1198" height="14" fill="url(#stg)"/>
<rect x="1112" y="367.8" width="88" height="14" fill="#6a849a" opacity="0.8"/>
<rect x="20" y="367.8" width="225" height="14" fill="#6f889c" opacity="0.25"/>
<rect x="20" y="328" width="478" height="40" fill="#b0b6c0"/>
<rect x="515" y="347" width="376" height="3.5" fill="#9aa1ad"/>
<rect x="891" y="346" width="203" height="22" fill="#b6bcc5"/>
<rect x="498" y="350.5" width="702" height="17.3" fill="#b3bac3"/>
<rect x="498" y="328" width="121" height="19.5" fill="#e9e9e9"/>
<rect x="619" y="328" width="272" height="22.5" fill="#9aa1ad"/>
<rect x="891.5" y="328" width="202.5" height="18.5" fill="#a88983"/>
<rect x="1094" y="328" width="106" height="22.5" fill="#9ba2ae"/>
<rect x="2" y="326.8" width="1198" height="1.6" fill="#f4f5f6"/>
<rect x="0" y="381.7" width="1200" height="1.3" fill="#d5e0e9"/>
<path d="M495.5 328V331M652.5 328V331" stroke="#f6f6f6" stroke-width="1" opacity="0.6"/>
<rect x="0" y="383" width="1200" height="360" fill="#345a6d"/>
<path d="M400 383V742M800.5 383V742" stroke="#527489" stroke-width="1.2"/>
<rect x="1198.8" y="383" width="1.2" height="359" fill="#5b7fa0"/>
<rect x="1198.8" y="0" width="1.2" height="327" fill="#ffffff" opacity="0.35"/>
<rect x="2" y="0" width="1198" height="1" fill="#ffffff" opacity="0.4"/>
<rect x="8.2" y="401.2" width="188.1" height="168.6" fill="#ccd0da"/>
<g clip-path="url(#mapclip)">
<rect x="8.2" y="401.2" width="188.1" height="168.6" fill="url(#ms)"/>
<path d="M23.5 401.2V569.8M42.2 401.2V569.8M61.0 401.2V569.8M79.8 401.2V569.8M98.5 401.2V569.8M117.2 401.2V569.8M136.0 401.2V569.8M154.8 401.2V569.8M173.5 401.2V569.8M192.2 401.2V569.8M8.2 414.2H196.3M8.2 432.9H196.3M8.2 451.7H196.3M8.2 470.4H196.3M8.2 489.2H196.3M8.2 507.9H196.3M8.2 526.7H196.3M8.2 545.5H196.3M8.2 564.2H196.3" stroke="#ffffff" stroke-width="0.8" opacity="0.5"/>
<g clip-path="url(#mc1)"><path transform="translate(35.0 525.0) rotate(-14.0)" d="M-90.0 -89.8H90.0M-90.0 -84.3H90.0M-90.0 -78.8H90.0M-90.0 -74.3H90.0M-90.0 -68.2H90.0M-90.0 -63.3H90.0M-90.0 -60.0H90.0M-90.0 -55.7H90.0M-90.0 -51.7H90.0M-90.0 -47.1H90.0M-90.0 -40.8H90.0M-90.0 -36.7H90.0M-90.0 -33.1H90.0M-90.0 -30.1H90.0M-90.0 -24.3H90.0M-90.0 -18.9H90.0M-90.0 -14.5H90.0M-90.0 -8.5H90.0M-90.0 -3.9H90.0M-90.0 2.5H90.0M-90.0 8.5H90.0M-90.0 11.9H90.0M-90.0 15.6H90.0M-90.0 19.7H90.0M-90.0 24.1H90.0M-90.0 29.7H90.0M-90.0 34.8H90.0M-90.0 38.7H90.0M-90.0 44.0H90.0M-90.0 48.2H90.0M-90.0 51.6H90.0M-90.0 55.9H90.0M-90.0 61.7H90.0M-90.0 66.0H90.0M-90.0 70.1H90.0M-90.0 75.8H90.0M-90.0 82.2H90.0M-90.0 86.9H90.0M-90.0 -90.0V90.0M-83.3 -90.0V90.0M-74.9 -90.0V90.0M-68.5 -90.0V90.0M-60.5 -90.0V90.0M-53.6 -90.0V90.0M-46.3 -90.0V90.0M-38.1 -90.0V90.0M-32.6 -90.0V90.0M-27.4 -90.0V90.0M-21.0 -90.0V90.0M-13.8 -90.0V90.0M-7.4 -90.0V90.0M-1.7 -90.0V90.0M4.3 -90.0V90.0M11.6 -90.0V90.0M17.2 -90.0V90.0M25.0 -90.0V90.0M32.8 -90.0V90.0M38.0 -90.0V90.0M45.7 -90.0V90.0M52.3 -90.0V90.0M58.6 -90.0V90.0M66.4 -90.0V90.0M73.9 -90.0V90.0M81.5 -90.0V90.0M87.1 -90.0V90.0" stroke="#f6f7fa" stroke-width="0.95" fill="none" opacity="0.80"/></g>
<g clip-path="url(#mc2)"><path transform="translate(75.0 495.0) rotate(24.0)" d="M-90.0 -89.5H90.0M-90.0 -84.4H90.0M-90.0 -80.8H90.0M-90.0 -74.8H90.0M-90.0 -69.4H90.0M-90.0 -64.1H90.0M-90.0 -57.8H90.0M-90.0 -53.4H90.0M-90.0 -48.6H90.0M-90.0 -42.6H90.0M-90.0 -38.2H90.0M-90.0 -32.8H90.0M-90.0 -29.4H90.0M-90.0 -22.7H90.0M-90.0 -19.0H90.0M-90.0 -13.9H90.0M-90.0 -8.9H90.0M-90.0 -5.0H90.0M-90.0 0.5H90.0M-90.0 7.2H90.0M-90.0 11.7H90.0M-90.0 17.3H90.0M-90.0 22.1H90.0M-90.0 27.6H90.0M-90.0 32.1H90.0M-90.0 36.6H90.0M-90.0 40.3H90.0M-90.0 45.9H90.0M-90.0 50.4H90.0M-90.0 54.1H90.0M-90.0 60.6H90.0M-90.0 64.6H90.0M-90.0 67.8H90.0M-90.0 74.0H90.0M-90.0 78.2H90.0M-90.0 82.4H90.0M-90.0 88.3H90.0M-89.6 -90.0V90.0M-83.2 -90.0V90.0M-77.7 -90.0V90.0M-70.7 -90.0V90.0M-63.6 -90.0V90.0M-55.8 -90.0V90.0M-49.9 -90.0V90.0M-43.1 -90.0V90.0M-37.5 -90.0V90.0M-32.3 -90.0V90.0M-25.7 -90.0V90.0M-20.9 -90.0V90.0M-13.9 -90.0V90.0M-8.2 -90.0V90.0M-1.0 -90.0V90.0M6.1 -90.0V90.0M11.7 -90.0V90.0M18.3 -90.0V90.0M23.4 -90.0V90.0M29.8 -90.0V90.0M35.3 -90.0V90.0M43.4 -90.0V90.0M48.8 -90.0V90.0M54.3 -90.0V90.0M61.2 -90.0V90.0M68.0 -90.0V90.0M73.0 -90.0V90.0M77.3 -90.0V90.0M84.6 -90.0V90.0" stroke="#f6f7fa" stroke-width="0.95" fill="none" opacity="0.80"/></g>
<g clip-path="url(#mc3)"><path transform="translate(95.0 545.0) rotate(-32.0)" d="M-90.0 -90.3H90.0M-90.0 -85.4H90.0M-90.0 -81.4H90.0M-90.0 -77.4H90.0M-90.0 -72.3H90.0M-90.0 -67.2H90.0M-90.0 -62.5H90.0M-90.0 -57.1H90.0M-90.0 -51.8H90.0M-90.0 -45.7H90.0M-90.0 -40.2H90.0M-90.0 -36.3H90.0M-90.0 -32.8H90.0M-90.0 -28.3H90.0M-90.0 -22.6H90.0M-90.0 -16.6H90.0M-90.0 -11.9H90.0M-90.0 -8.5H90.0M-90.0 -3.1H90.0M-90.0 1.3H90.0M-90.0 6.8H90.0M-90.0 12.1H90.0M-90.0 16.8H90.0M-90.0 22.5H90.0M-90.0 28.8H90.0M-90.0 33.8H90.0M-90.0 37.2H90.0M-90.0 42.5H90.0M-90.0 47.4H90.0M-90.0 54.1H90.0M-90.0 59.5H90.0M-90.0 64.0H90.0M-90.0 69.1H90.0M-90.0 74.6H90.0M-90.0 80.1H90.0M-90.0 84.9H90.0M-89.8 -90.0V90.0M-81.2 -90.0V90.0M-75.9 -90.0V90.0M-69.2 -90.0V90.0M-62.3 -90.0V90.0M-57.0 -90.0V90.0M-49.3 -90.0V90.0M-43.0 -90.0V90.0M-35.6 -90.0V90.0M-28.3 -90.0V90.0M-19.9 -90.0V90.0M-12.9 -90.0V90.0M-6.3 -90.0V90.0M2.6 -90.0V90.0M7.0 -90.0V90.0M12.9 -90.0V90.0M20.1 -90.0V90.0M25.2 -90.0V90.0M32.2 -90.0V90.0M40.1 -90.0V90.0M46.7 -90.0V90.0M54.1 -90.0V90.0M59.7 -90.0V90.0M67.3 -90.0V90.0M74.2 -90.0V90.0M80.1 -90.0V90.0M87.2 -90.0V90.0" stroke="#f6f7fa" stroke-width="0.95" fill="none" opacity="0.80"/></g>
<g clip-path="url(#mc4)"><path transform="translate(160.0 545.0) rotate(28.0)" d="M-90.0 -90.4H90.0M-90.0 -81.4H90.0M-90.0 -73.0H90.0M-90.0 -64.7H90.0M-90.0 -58.6H90.0M-90.0 -51.4H90.0M-90.0 -44.1H90.0M-90.0 -35.5H90.0M-90.0 -28.8H90.0M-90.0 -21.3H90.0M-90.0 -12.3H90.0M-90.0 -6.1H90.0M-90.0 3.0H90.0M-90.0 11.6H90.0M-90.0 19.7H90.0M-90.0 28.3H90.0M-90.0 37.1H90.0M-90.0 43.9H90.0M-90.0 51.4H90.0M-90.0 57.8H90.0M-90.0 67.7H90.0M-90.0 76.6H90.0M-90.0 82.7H90.0M-90.6 -90.0V90.0M-80.0 -90.0V90.0M-68.7 -90.0V90.0M-57.0 -90.0V90.0M-48.6 -90.0V90.0M-40.2 -90.0V90.0M-31.4 -90.0V90.0M-19.5 -90.0V90.0M-9.6 -90.0V90.0M-1.6 -90.0V90.0M7.5 -90.0V90.0M16.8 -90.0V90.0M28.6 -90.0V90.0M35.8 -90.0V90.0M44.2 -90.0V90.0M55.0 -90.0V90.0M65.8 -90.0V90.0M73.8 -90.0V90.0M81.6 -90.0V90.0" stroke="#f6f7fa" stroke-width="0.95" fill="none" opacity="0.45"/></g>
<g clip-path="url(#mc5)"><path transform="translate(28.0 418.0) rotate(20.0)" d="M-90.0 -90.1H90.0M-90.0 -84.8H90.0M-90.0 -77.8H90.0M-90.0 -70.3H90.0M-90.0 -65.8H90.0M-90.0 -60.1H90.0M-90.0 -53.3H90.0M-90.0 -47.2H90.0M-90.0 -42.8H90.0M-90.0 -37.2H90.0M-90.0 -29.8H90.0M-90.0 -23.2H90.0M-90.0 -16.9H90.0M-90.0 -10.4H90.0M-90.0 -4.0H90.0M-90.0 0.8H90.0M-90.0 6.2H90.0M-90.0 13.0H90.0M-90.0 21.3H90.0M-90.0 25.4H90.0M-90.0 31.0H90.0M-90.0 38.4H90.0M-90.0 43.0H90.0M-90.0 48.1H90.0M-90.0 54.7H90.0M-90.0 59.3H90.0M-90.0 65.5H90.0M-90.0 71.3H90.0M-90.0 78.4H90.0M-90.0 84.6H90.0M-90.0 89.6H90.0M-89.8 -90.0V90.0M-81.8 -90.0V90.0M-73.3 -90.0V90.0M-67.8 -90.0V90.0M-57.5 -90.0V90.0M-51.9 -90.0V90.0M-43.8 -90.0V90.0M-36.3 -90.0V90.0M-28.4 -90.0V90.0M-20.6 -90.0V90.0M-15.4 -90.0V90.0M-6.4 -90.0V90.0M0.5 -90.0V90.0M9.8 -90.0V90.0M15.8 -90.0V90.0M22.0 -90.0V90.0M28.4 -90.0V90.0M34.5 -90.0V90.0M42.4 -90.0V90.0M50.6 -90.0V90.0M60.2 -90.0V90.0M67.4 -90.0V90.0M73.9 -90.0V90.0M80.1 -90.0V90.0M89.4 -90.0V90.0" stroke="#f6f7fa" stroke-width="0.95" fill="none" opacity="0.50"/></g>
<path d="M8 470Q40 480 70 492T100 470M70 492Q85 520 80 570M14 401Q30 440 48 478" stroke="#fbfbfd" stroke-width="1.6" fill="none" opacity="0.9"/>
<path d="M40 465.6H150M8 522.6H104" stroke="#2f4858" stroke-width="0.7"/>
<path d="M8.2 409L11 410.5L14.8 414.3L18 421L20 427.6L23 435L26 441L30 448L34.1 454.3L39 458L44.5 460.2L41 462L40 464.7L41.5 467.5L44.5 469.1L45.5 472L44.5 475.5L40 477L35.6 477.5L30 476L22.2 475.8L15 477L8.2 476.5Z" fill="#345a6d"/>
<path d="M11 419q3 3 4 8q3 5 5 7M15 431q-2 4 0 8q4 5 6 4M26 441l0 12l-2 10l0 12M33 452l-6 8l-1 8" stroke="#7f98ab" stroke-width="0.7" fill="none"/>
<path d="M51.9 401.2L86.7 401.2L89 408.3L93 414L96.4 420.2L97.8 426.1L96 429L93.4 429.8L91 428.3L89 428.6L87.5 431L87.5 433.5L90 438L94.9 443.9L99 450L103.8 458.8L107 466L110.5 475L113 484L116 492L112 494L108 487L103.8 482.5L99 477L94.9 472.1L90 467.5L86 463.2L78 458L71.2 452.8L63 448.5L56.3 443.9L51 439L47.4 433.5L46.8 429L47.4 424.7L50 418L52.6 411.3L52.8 406Z" fill="#345a6d"/>
<path d="M76 402l14 21l2 4" stroke="#8aa2b4" stroke-width="0.7" fill="none"/>
<path d="M114.2 466.5Q118 462.5 124.6 465Q128 472 127.6 481Q130 500 131 522.5Q126 520 121.5 513.5Q116 498 114.6 484Q113 474 114.2 466.5Z" fill="#345a6d"/>
<path d="M131 440q3 -3 5 0q1 6 3 10q3 6 2 9q-3 1 -6 -5q-3 -7 -4 -14zM143 440q4 -3 6 1q2 8 4 13q1 5 -3 6q-5 -1 -6 -7q-2 -8 -1 -13zM133 403q2 -1 3 1l2 6q0 2 -2 1q-2 -4 -3 -8zM137 411q2 0 3 3l1 8q-1 3 -3 1q-1 -6 -1 -12zM132 424q1 -1 2 0q1 2 -1 3q-2 0 -1 -3z" fill="#345a6d"/>
<path d="M150 463l8 -4l1 2l-9 5zM168 450l8 -4l1 2l-8 4zM186 436l10 -4l0 2l-9 5zM186 454l10 -3l0 2l-10 3zM192 476q2 -1 3 1q0 2 -2 2q-2 -1 -1 -3z" fill="#345a6d"/>
<path d="M160 509l6 4l14 10l0 3l-8 -2l-8 -8zM178 513l6 4l-1 2l-6 -4zM174 536q8 -4 15 0q2 3 -2 4q-8 1 -13 -1zM192 522l4.5 -3l0 8l-3 1zM183 527l3 -2l1 2l-3 2z" fill="#345a6d"/>
<path d="M84.5 527.5q2.5 -1.5 4.5 0.5l1 8l-1 10q-2 1.5 -3.5 -0.5l-1.5 -10zM26.5 558q4 -2 7 1q1 4 -2 6q-5 0 -6 -3q0 -2 1 -4zM11.5 564q2 -1 3 1q1 2 -1 4q-3 -1 -3 -3zM20 545.5q1.5 -1 2.5 0.5q0 1.5 -1.5 1.5q-1.5 -0.5 -1 -2z" fill="#345a6d"/>
<circle cx="86.8" cy="530.5" r="1.3" fill="none" stroke="#c9d3dc" stroke-width="0.5"/>
<polygon points="84.4,493.8 138.3,468.4 137.4,485.0 147.1,500.8 104.2,521.8" fill="#d9dc4e" opacity="0.96"/>
<g clip-path="url(#yclip)">
<polygon points="80.0,490.0 127.5,470.0 129.5,481.0 131.0,515.0 100.0,525.0" fill="#b4b73a" />
<path d="M114.2 466.5Q118 462.5 124.6 465Q128 472 127.6 481Q130 500 131 522.5Q126 520 121.5 513.5Q116 498 114.6 484Q113 474 114.2 466.5Z" fill="#a5aa39"/>
<path d="M99 490L103 515M107 487L111 512M116 484L119 508" stroke="#c6c944" stroke-width="1.2" opacity="0.7"/>
</g>
</g>
<rect x="8.2" y="401.2" width="188.1" height="176.8" fill="none" stroke="#c9d3da" stroke-width="0.7"/>
<path d="M8.2 569.8H196.3" stroke="#c9d3da" stroke-width="0.6"/>
<path d="M23.5 569.8V572.8M42.2 569.8V572.8M61.0 569.8V572.8M79.8 569.8V572.8M98.5 569.8V572.8M117.2 569.8V572.8M136.0 569.8V572.8M154.8 569.8V572.8M173.5 569.8V572.8M192.2 569.8V572.8" stroke="#c9d3da" stroke-width="0.6"/>
<rect x="8.2" y="581" width="18.5" height="6.8" fill="#d3d436"/>
<ellipse cx="19.2" cy="648.8" rx="11.7" ry="11.3" fill="#f4f6f8"/>
<rect x="7.5" y="649" width="11.6" height="22.6" fill="#f4f6f8"/>
<path d="M8.2 655A11 11 0 0 0 17 660.6" stroke="#345a6d" stroke-width="0.7" fill="none"/>
<path d="M14.2 660V648L15.3 647V641L16.2 640.6V638H17.2V640.6H18.6V637.6H19.6V640.6H21V637.6H22V640.6H23V638H24V640.6L24.6 641V647L25.6 648V658L23 660.6Z" fill="#4f6f86"/>
<path d="M16.7 641V659M19.1 641V660M21.5 641V660M23.6 641V659" stroke="#2f5068" stroke-width="0.6"/>
<circle cx="815.9" cy="398.8" r="5.8" fill="none" stroke="#b9c8d2" stroke-width="0.7"/>
<circle cx="815.6" cy="504.0" r="5.8" fill="none" stroke="#b9c8d2" stroke-width="0.7"/>
<circle cx="816.3" cy="608.8" r="5.8" fill="none" stroke="#b9c8d2" stroke-width="0.7"/>
<rect x="1055.4" y="389.9" width="137.9" height="92.2" fill="#e6eaed"/><g clip-path="url(#pcA)"><g transform="translate(1056.3 390.8)"><rect x="0" y="0" width="137" height="91" fill="#e8e8e5"/><g filter="url(#b1)"><polygon points="0,50 34,44 88,38 137,38 137,91 0,91" fill="#cbc4b6" /><polygon points="96,40 137,40 137,91 110,91" fill="#9c978f" /><polygon points="85,15 100,14.5 101,26 85,27" fill="#a39d94" /><polygon points="87,17 99,16.5 99,19 87,19.5" fill="#8a847c" /><polygon points="0,31 6,29 12,28 18,30 24,28 30,27 36,29 38,46 22,50 14,50 8,49 0,50" fill="#5b6a4c" /><polygon points="4,34 16,31 30,32 32,42 12,46 4,44" fill="#6f7d5a" /><polygon points="33,27 38,22 46,18.5 54,17 62,17.5 70,20 77,24 80,30 80,38 72,41 56,42 44,41 36,38" fill="#4c5c45" /><polygon points="46,24 58,20 70,23 76,30 70,37 54,38 46,33" fill="#3f4f3c" /><polygon points="38,26 48,21 52,26 44,32" fill="#62744f" /><polygon points="28,38 54,37 56,44 40,47 30,47" fill="#7f8c62" /><polygon points="81,26 88,24 96,25 102,28 103,38 94,40 84,37" fill="#4f5f48" /><polygon points="0,41 7,41 7,50 0,51" fill="#3e463a" /><polygon points="7,41 15,40.5 15.5,49 7,50" fill="#aaa598" /><polygon points="101,1 137,1 137,62 128,56 116,48 106,43 102,36 101,22" fill="#46423e" /><polygon points="103,4 112,3 112,12 103,13" fill="#6a5f5a" /><polygon points="114,20 128,17 129,24 115,28" fill="#3c4a68" /><polygon points="107,33 118,29 137,24 137,64 126,55 114,47 107,43" fill="#9a9082" /><polygon points="110,33 113,32 114,46 111,44" fill="#c9bfae" /><polygon points="116,32 119,31 120,50 117,48" fill="#55504a" /><polygon points="124,29 127,28 128,56 125,54" fill="#5a544d" /><polygon points="131,26 137,25 137,62 132,58" fill="#5c564f" /><polygon points="34,44 60,41 88,38.5 98,41 70,46 40,50" fill="#d8cfbe" /><polygon points="0,66 14,58 30,53 60,49 92,45 106,47 128,60 137,66 137,76 100,75 60,75 20,77 0,78" fill="#a19d95" /><polygon points="40,56 80,52 104,52 120,62 90,64 50,62" fill="#8f8b84" /><polygon points="0,52 30,49 34,53 14,58 0,66" fill="#cfc6b4" /><polygon points="46,62 62,61 64,63 48,64" fill="#6f6c67" /><polygon points="104,64 112,64 112,72 104,72" fill="#7a766f" /><polygon points="0,77 30,76 75,75 75,91 0,91" fill="#d3cab8" /><polygon points="75,75 137,76 137,91 75,91" fill="#9c978f" /><polygon points="78,82 88,82 88,91 78,91" fill="#b9b1a2" /></g><rect x="0" y="40" width="137" height="51" filter="url(#nzs)" opacity="0.35"/></g></g>
<rect x="1055.4" y="494.9" width="137.9" height="92.1" fill="#e6eaed"/><g clip-path="url(#pcB)"><g transform="translate(1056.3 495.8)"><rect x="0" y="0" width="137" height="91" fill="#737f49"/><g filter="url(#b1)"><polygon points="26,0 137,0 137,11 120,12 100,10 80,12 70,8 52,3 40,8 30,12" fill="#d7dee3" /><polygon points="0,0 6,0 5,9 0,11" fill="#d3d3d8" /><polygon points="2,2 10,1 20,3 30,1 33,12 36,26 35,38 20,40 4,36 1,20" fill="#3f472f" /><polygon points="8,4 14,3 15,20 9,22" fill="#5d6740" /><polygon points="24,6 30,8 30,30 25,30" fill="#59633e" /><polygon points="45,4 52,1 62,4 72,8 75,14 60,18 47,16" fill="#566a3b" /><polygon points="50,8 58,6 62,12 54,14" fill="#7a8c58" /><polygon points="38,19 60,15 90,14 112,12 137,13 137,40 110,38 80,37 50,40 40,36" fill="#72843f" /><polygon points="40,22 70,19 100,18 110,20 108,24 60,26 42,27" fill="#8a9a5e" /><polygon points="46,27 88,25 92,36 50,38" fill="#3e422c" /><polygon points="96,24 108,22 110,36 98,36" fill="#4a4f34" /><polygon points="116,16 137,15 137,24 118,24" fill="#4f6138" /><polygon points="125,24 137,22 137,42 128,40" fill="#4d5b36" /><polygon points="109.5,13 113,13 113.5,36 110,36" fill="#b3a786" /><polygon points="86,22 87.5,22 88,36 86.5,36" fill="#a79c7e" /><polygon points="93.5,24 95.5,24 96,36 94,36" fill="#9c8f70" /><polygon points="40,28 42,28 42,40 40,40" fill="#a9a27e" /><polygon points="36,38 137,38 137,52 100,50 60,50 40,52" fill="#8f9062" /><polygon points="70,41 100,40 104,45 72,46" fill="#6f7c4a" /><polygon points="96,42 137,40 137,50 110,52" fill="#8d7a5c" /><polygon points="80,49 112,48 118,55 112,59 84,60" fill="#6a8a58" /><polygon points="0,36 14,34 20,40 24,60 22,91 0,91" fill="#74853f" /><polygon points="10,28 16,30 20,50 14,52" fill="#8a9a60" /><polygon points="16,42 34,41 38,56 20,58" fill="#9a9a6c" /><polygon points="40,46 50,42 58,50 62,66 58,91 34,91 36,60" fill="#7d9242" /><polygon points="60,64 137,56 137,91 60,91" fill="#848e48" /><polygon points="88,70 137,64 137,91 92,91" fill="#8a8258" /><polygon points="118,80 137,76 137,91 122,91" fill="#6c7a3c" /><polygon points="68,54 84,54 86,62 70,63" fill="#b5a88c" /></g><rect x="58.5" y="53" width="9.5" height="9" fill="#f0f2f1" filter="url(#b05)"/><rect x="58.5" y="53" width="9.5" height="2.2" fill="#c9d2cf" filter="url(#b05)"/><rect x="0" y="13" width="137" height="80" fill="#8d8868" opacity="0.3" filter="url(#b1)"/><rect x="0" y="12" width="137" height="80" filter="url(#nzd)" opacity="0.5"/><rect x="0" y="14" width="137" height="78" filter="url(#nzl)" opacity="0.45"/></g></g>
<rect x="1055.5" y="599.1" width="138.2" height="95.8" fill="#e6eaed"/><g clip-path="url(#pcC)"><g transform="translate(1056.4 600.0)"><rect x="0" y="0" width="137" height="95" fill="#e9e9e8"/><g filter="url(#b1)"><polygon points="0,46 8,45 16,42 24,40 30,38 40,37 52,38 62,36 73,37 76,32 84,29 92,28 100,29 108,27 118,27.5 128,27 137,27 137,58 0,58" fill="#64764a" /><polygon points="73,36 80,30 92,28 104,28 118,27.5 137,27 137,56 100,56 78,52" fill="#4b5b3b" /><polygon points="24,42 36,39 48,40 60,44 60,54 24,54" fill="#6d7f52" /><polygon points="0,54 137,54 137,95 0,95" fill="#929c8e" /><polygon points="43,54 137,54 137,68 110,66 84,64 60,68 44,70" fill="#5f6e4f" /><polygon points="46,64 70,60 90,64 90,68 60,72" fill="#b9bcb2" /><polygon points="60,70 90,64 137,68 137,95 48,95 52,84" fill="#b3b7af" /><polygon points="44,70 92,62 94,66 62,74 48,88 46,80" fill="#6a7666" /><polygon points="48,86 72,70 74,72 52,90" fill="#7c8678" /><polygon points="0,47 10,46 20,50 30,54 40,60 46,70 48,86 40,90 0,92" fill="#6e8250" /><polygon points="4,56 16,54 22,66 12,74 4,70" fill="#8a9a66" /><polygon points="22,62 36,62 42,78 30,84" fill="#5f7244" /><polygon points="0,86 46,86 50,95 0,95" fill="#8d8a5e" /><polygon points="33.3,37 42.7,37 43.3,52 32.7,52" fill="#bdb5a0" /><polygon points="32.7,50.5 43.3,50.5 43.3,53 32.7,53" fill="#4c4a40" /><polygon points="33.5,54 43.5,54 43.5,65 34,65" fill="#a9aa95" /><polygon points="63.6,44 72.4,44 72.4,51 63.6,51" fill="#9a8260" /><polygon points="65,37 70,37 70,44 65,44" fill="#8d8d84" /><polygon points="105,50 114,49 114,56 105,56" fill="#d6d6d6" /><polygon points="114,49 123,50 123,56 114,56" fill="#7f8ab5" /><polygon points="101,80 108,78 117,80 119,88 118,95 100,95" fill="#a9906a" /><polygon points="102,88 118,88 118,91 102,91" fill="#6b5a44" /><polygon points="107,77 109.5,77 109.5,82 107,82" fill="#5a5a52" /><polygon points="123,81 130,79 137,82 137,95 123,95" fill="#ad9875" /><polygon points="125,78.5 127.5,78.5 127.5,84 125,84" fill="#5e5e55" /></g><g filter="url(#b05)" stroke="#8c8c87" fill="none"><path d="M0.5 14.2L36.7 12L62.3 28.7L94.6 33.2" stroke-width="1.7"/><path d="M0 33.2L95 34.4" stroke-width="2.7" stroke="#5f5f5a"/><path d="M0.5 24L7.7 32M7.7 32L16.4 15M16.4 15L28 32.3M28 32.3L36.7 12.5M36.7 12.5L38 32.5M36.7 12.5L46 32.6M36.7 12.5L54 32.8M44 17L44.5 32.6M52 22L52.3 32.8M62.3 28.7L63 33M58 26L58.5 33M62.3 28.7L70 33.5M72 30.2L73 33.6M80 31.3L81 33.8" stroke-width="1.15"/><path d="M97 32.5L106.5 25.5L112 28.5" stroke-width="1"/></g><rect x="0" y="36" width="137" height="59" filter="url(#nzs)" opacity="0.22"/></g></g>
</svg>
<div class="t lab" style="left:20.0px;top:329.8px;transform:scaleX(0.8317);">INFORMAL SETTLEMENTS</div>
<div class="t lab" style="left:502.0px;top:329.8px;transform:scaleX(0.8173);color:#d3d3d3;">CONCRETE PLATHWAY</div>
<div class="t lab" style="left:622.8px;top:329.8px;transform:scaleX(0.8550);">FARMLAND + CULTIVATION (DOMESTIC)</div>
<div class="t lab" style="left:894.7px;top:329.8px;transform:scaleX(0.8196);">RED RIVER ASIA (SONG CAI)</div>
<div class="t lab" style="left:1096.5px;top:329.8px;transform:scaleX(0.8450);">CULTIVATION (TRADE)</div>
<div class="t " style="left:791.2px;top:237.0px;transform:scaleX(0.8697);font-size:9.4px;letter-spacing:1.2px;color:#f4f5f7;">SITE</div>
<div class="t mk" style="left:509.3px;top:220.9px;transform:translateX(-50%);">A</div>
<div class="t mk" style="left:664.5px;top:155.6px;transform:translateX(-50%);">B</div>
<div class="t mk" style="left:907.7px;top:159.4px;transform:translateX(-50%);">C</div>
<div class="t " style="left:1180.6px;top:282.2px;transform:translateX(-50%);font-size:7px;font-weight:bold;font-style:italic;color:#e8eef0;">N</div>
<div class="t " style="left:1088.5px;top:306.9px;transform:translateX(-50%);font-size:5.5px;color:#5a6c79;">0</div>
<div class="t " style="left:1101.5px;top:306.9px;transform:translateX(-50%);font-size:5.5px;color:#5a6c79;">5</div>
<div class="t " style="left:1128.0px;top:306.9px;transform:translateX(-50%);font-size:5.5px;color:#5a6c79;">10</div>
<div class="t " style="left:1180.0px;top:306.9px;transform:translateX(-50%);font-size:5.5px;color:#5a6c79;">20M</div>
<div class="t " style="left:8.7px;top:387.2px;transform:scaleX(0.9537);font-weight:bold;font-size:8.5px;color:#f2f5f7;">LOCATION OF SITE ALONG THE RED RIVER</div>
<div class="t p" style="left:29.6px;top:581.3px;transform:scaleX(0.9822);">site location</div>
<div class="t " style="left:21.2px;top:661.9px;transform:scaleX(0.8973);font-weight:bold;font-size:11.6px;color:#f4f6f8;">SITE LOCATION: LAYERS OF INHABITATION</div>
<div class="t " style="left:21.2px;top:674.0px;transform:scaleX(0.8897);font-weight:bold;font-size:9.5px;color:#3a7886;filter:blur(0.5px);">breaking down the different areas of the site, in order to understand its context</div>
<div class="t " style="left:12.3px;top:662.4px;transform:translateX(-50%);font-weight:bold;font-size:7.4px;color:#2f4f62;">3</div>
<div class="t p" style="left:21.2px;top:686.4px;transform:scaleX(1.0028);">The scheme must respond to and integrate amongst a series of inhabited layers. The poetic behind</div>
<div class="t p" style="left:21.2px;top:695.9px;transform:scaleX(1.0037);">these horizontal layers encouraged the development of a building that would act as an extension to the</div>
<div class="t p" style="left:21.2px;top:705.6px;transform:scaleX(1.0025);">concrete pathway (A), where currently, many children are already using it for play.</div>
<div class="t cm" style="left:815.9px;top:395.9px;transform:translateX(-50%);">A</div>
<div class="t h" style="left:808.0px;top:414.2px;transform:scaleX(0.9668);">CURRENT COMMUNITY</div>
<div class="t p" style="left:808.0px;top:422.7px;transform:scaleX(0.9949);">At the top of the river bank there is an open pathway. This is</div>
<div class="t p" style="left:808.0px;top:432.4px;transform:scaleX(1.0060);">used by the community for meetings, playing and drying rice.</div>
<div class="t cm" style="left:815.6px;top:501.1px;transform:translateX(-50%);">B</div>
<div class="t h" style="left:808.0px;top:516.2px;transform:scaleX(0.9552);">CURRENT SITE USE</div>
<div class="t p" style="left:808.0px;top:524.4px;transform:scaleX(0.9974);">At the moment, the community uses the riverbank as domestic</div>
<div class="t p" style="left:808.0px;top:533.9px;transform:scaleX(0.9969);">farmland. However these allotments get destroyed each year</div>
<div class="t p" style="left:808.0px;top:543.4px;transform:scaleX(1.0019);">by flooding.</div>
<div class="t cm" style="left:816.3px;top:605.9px;transform:translateX(-50%);">C</div>
<div class="t h" style="left:808.0px;top:622.2px;transform:scaleX(0.9815);">EDGE CONDITION</div>
<div class="t p" style="left:808.0px;top:630.9px;">The site sits beside the Long Bien Bridge. There is also an</div>
<div class="t p" style="left:808.0px;top:640.4px;transform:scaleX(0.9980);">existing riverboat community that lives on the edge of the river.</div>
</body></html>
